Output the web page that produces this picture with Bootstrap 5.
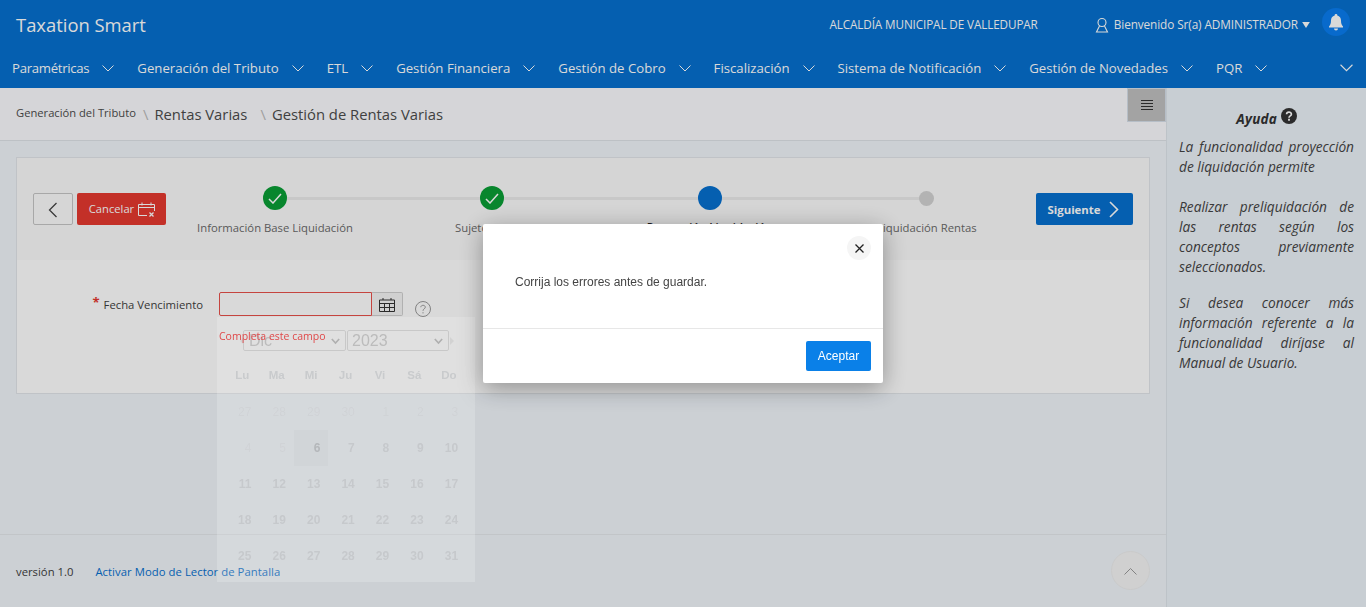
<!DOCTYPE html>
<html lang="es">
<head>
<meta charset="utf-8">
<title>Taxation Smart</title>
<link href="https://cdn.jsdelivr.net/npm/bootstrap@5.3.0/dist/css/bootstrap.min.css" rel="stylesheet">
<style>
html,body{height:607px;overflow:hidden}
body{font-family:"Open Sans","Noto Sans",sans-serif;font-size:12px;color:#404040;background:#f0f6fc}
.app-head{background:#0670cf;height:88px;color:#fff}
.brand-row{height:50px;padding:0 16px}
.brand-name{font-size:18.4px;line-height:24px;margin-top:-1px}
.entity{font-size:11.7px;letter-spacing:-.1px;margin-right:56px}
.user-box{font-size:11.8px;letter-spacing:-.1px}
.bell-wrap{width:28px;height:28px;border-radius:50%;background:#0a7df0;margin-left:12px;margin-top:-6px}
.menu-row{height:38px;padding:0 12px;position:relative}
.menu-item{font-size:13.2px;line-height:18px;color:#fff;text-decoration:none;margin-top:-2px;white-space:nowrap}
.menu-item:first-child{letter-spacing:-.3px}
.menu-item svg{margin-left:13px;margin-right:23px;vertical-align:1px}
.menu-end{position:absolute;right:13px;top:14px}
.work{height:519px}
.work-main{width:1167px;background:#f0f5fa;border-right:1px solid #dfe6ec}
.crumbs{height:53px;background:#fbfbfe;border-bottom:1px solid #dfe3e8;padding:0 16px;position:relative;color:#4c4c4c}
.crumb-sm{font-size:11.2px;margin-top:-1px}
.crumb-lg{font-size:14.8px;margin-top:1px}
.crumb-sep{color:#bbb;font-size:15px;margin:0 6px 0 7px}
.crumb-sep-b{margin:0 6px 0 13px}
.side-toggle{position:absolute;right:0;top:0;width:39px;height:34px;background:#c0c0c0;border:1px solid #d6e0ea}
.work-body{flex:1;padding:16px 16px 0}
.wiz-card{height:237px;border:1px solid #e2e6ea;background:#fff;border-radius:0}
.wiz-top{height:102px;background:#fbfbfb;padding:35px 16px 0;align-items:flex-start}
.btn-back{width:40px;height:32px;border:1px solid #c6c6c6;border-radius:2px;background:#fcfcfc;padding:0;margin-right:4px;flex:none}
.btn-cancel{width:89px;height:32px;background:#e53930;border:0;border-radius:2px;color:#fff;font-size:11.2px;padding:1px 0 0 2px;margin-right:1px;flex:none}
.btn-next{width:97px;height:32px;background:#0670cf;border:0;border-radius:2px;color:#fff;font-size:11.4px;font-weight:700;padding:1px 3px 0 0;margin-left:.5px;flex:none}
.steps{width:869.2px;margin-left:-.7px;flex:none}
.step-col{width:217.3px;flex:none;position:relative;text-align:center;height:60px;font-size:11.3px;color:#6a6a6a}
.step-line{position:absolute;left:108px;right:-108px;top:4px;height:3px;background:#ececec;z-index:0}
.step-dot{width:24px;height:24px;border-radius:50%;position:relative;z-index:1;margin:-7px auto 10px;display:flex;align-items:center;justify-content:center;background:#0a9e36}
.step-dot.dot-now{background:#0670cf}
.step-dot.dot-next{background:transparent}
.step-dot.dot-next i{display:block;width:15px;height:15px;border-radius:50%;background:#d3d3d3}
.step-now{color:#222;font-weight:600}
.step-now .step-dot{margin-bottom:9px}
.form-line{padding-top:32px}
.fld-label{width:186px;text-align:right;font-size:11.3px;color:#3e3e3e;padding-top:3px}
.fld-label b{color:#e53930;font-weight:700;font-size:13px;margin-right:1px;position:relative;top:-2px}
.fld-input{width:153px;height:24px;border:1px solid #e8504a;border-radius:2px 0 0 2px;background:#fff;margin-left:16px;padding:0}
.fld-btn{width:31px;height:24px;border:1px solid #d0d0d0;border-left:0;background:#f5f5f5;padding:0;border-radius:0 2px 2px 0}
.fld-help{margin:9px 0 0 12px}
.foot-bar{height:73px;border-top:1px solid #e4e8ec;padding:2px 16px 0;position:relative;font-size:11.3px}
.foot-link{color:#0670cf;text-decoration:none;margin-left:22px;letter-spacing:.05px}
.go-top{position:absolute;right:16px;top:16px;width:39px;height:39px;border-radius:50%;background:#f5f5f5;border:1px solid #eeeeee}
.help-pane{flex:1;background:#ecf2f8;padding:20px 12px 0 12px}
.help-title{font-style:italic;font-weight:700;font-size:13.5px;color:#333;text-align:center;margin-bottom:8px;letter-spacing:.2px}
.help-title svg{vertical-align:0}
.help-text{font-style:italic;font-size:13.7px;line-height:20px;color:#444;text-align:justify;margin:0 0 20px}
.help-tight{margin-bottom:16px}
.dim-layer{position:fixed;inset:0;background:rgba(0,0,0,.15);z-index:1040}
.date-pop{position:fixed;left:217px;top:317px;width:258px;height:265px;background:rgba(255,255,255,.18);z-index:1041;color:#c6c9cc;font-family:"Liberation Sans",sans-serif}
.date-err{position:fixed;left:219px;top:329px;color:#e0494a;font-size:10.5px;z-index:1042;line-height:14px}
.pop-sel{position:absolute;top:13px;height:21px;border:1px solid #c8c8c8;border-radius:2px;font-size:16px;line-height:19px;padding-left:5px;color:#bcbcbc}
.pop-sel svg{position:absolute;right:5px;top:7px}
.pop-sel-y{padding-left:4px}
.pop-arrow{position:absolute;top:20px;width:0;height:0;border-top:4px solid transparent;border-bottom:4px solid transparent}
.pop-prev{left:23px;border-right:4px solid #d2d2d2}
.pop-next{left:233px;border-left:4px solid #d2d2d2}
.cal-grid{position:absolute;left:8px;top:40px;width:241px;display:grid;grid-template-columns:repeat(7,34.45px);grid-template-rows:37px repeat(5,36px);font-size:12px;font-weight:700;text-align:right;line-height:36px}
.cal-grid span{padding-right:8px}
.cal-grid .wk{text-align:center;padding:0;line-height:36px;font-size:11.5px;color:#c9cbcd}
.cal-grid .old{color:#d0d3d6;font-weight:400}
.cal-grid .today{background:#d1d5d8;color:#b4b7ba}
.alert-dialog{width:400px;max-width:400px;margin:224px 0 0 483px}
.alert-box{height:159px;border:0;border-radius:2px;box-shadow:0 5px 25px rgba(0,0,0,.35);font-family:"Liberation Sans",sans-serif}
.alert-close{position:absolute;right:12px;top:12px;width:24px;height:24px;border-radius:50%;background:#f5f5f5;border:0;padding:0;line-height:1}
.alert-msg{height:105px;padding:51px 32px 0;font-size:12px;color:#444;line-height:14px;border-bottom:1px solid #e7e7e7}
.alert-foot{padding:12px}
.alert-ok{width:65px;height:30px;background:#0a80e8;border:0;border-radius:2px;color:#fff;font-size:12px;padding:0}
</style>
</head>
<body>
<header class="app-head">
  <div class="brand-row d-flex align-items-center justify-content-between">
    <div class="brand-name">Taxation Smart</div>
    <div class="d-flex align-items-center">
      <span class="entity">ALCALDÍA MUNICIPAL DE VALLEDUPAR</span>
      <span class="user-box d-flex align-items-center">
        <svg width="16" height="16" viewBox="0 0 16 16" fill="none" stroke="#fff" stroke-width="1.1" class="me-1"><circle cx="8" cy="5.5" r="4"/><path d="M5.5 9 2.5 15h11L10.500 9"/></svg>
        Bienvenido Sr(a) ADMINISTRADOR
        <svg width="8" height="6" viewBox="0 0 9 7" fill="#fff" class="ms-1"><path d="M0 0h9L4.500 7z"/></svg>
      </span>
      <span class="bell-wrap d-flex align-items-center justify-content-center">
        <svg width="14" height="17" viewBox="0 0 14 17" fill="#fff"><path d="M7 0a1.300 1.300 0 0 1 1.300 1.500C10.700 2.100 12 4 12 6.500c0 3 .6 4.500 2 6v1H0v-1c1.400-1.500 2-3 2-6C2 4 3.300 2.100 5.700 1.500A1.300 1.300 0 0 1 7 0zM5 14.500h4a2 2 0 0 1-4 0z"/></svg>
      </span>
    </div>
  </div>
  <nav class="menu-row d-flex align-items-center">
    <a class="menu-item" href="#">Paramétricas<svg width="12" height="7" viewBox="0 0 12 7" fill="none" stroke="#fff"><path d="M.5.5 6 6 11.500.5"/></svg></a>
    <a class="menu-item" href="#">Generación del Tributo<svg width="12" height="7" viewBox="0 0 12 7" fill="none" stroke="#fff"><path d="M.5.5 6 6 11.500.5"/></svg></a>
    <a class="menu-item" href="#">ETL<svg width="12" height="7" viewBox="0 0 12 7" fill="none" stroke="#fff"><path d="M.5.5 6 6 11.500.5"/></svg></a>
    <a class="menu-item" href="#">Gestión Financiera<svg width="12" height="7" viewBox="0 0 12 7" fill="none" stroke="#fff"><path d="M.5.5 6 6 11.500.5"/></svg></a>
    <a class="menu-item" href="#">Gestión de Cobro<svg width="12" height="7" viewBox="0 0 12 7" fill="none" stroke="#fff"><path d="M.5.5 6 6 11.500.5"/></svg></a>
    <a class="menu-item" href="#">Fiscalización<svg width="12" height="7" viewBox="0 0 12 7" fill="none" stroke="#fff"><path d="M.5.5 6 6 11.500.5"/></svg></a>
    <a class="menu-item" href="#">Sistema de Notificación<svg width="12" height="7" viewBox="0 0 12 7" fill="none" stroke="#fff"><path d="M.5.5 6 6 11.500.5"/></svg></a>
    <a class="menu-item" href="#">Gestión de Novedades<svg width="12" height="7" viewBox="0 0 12 7" fill="none" stroke="#fff"><path d="M.5.5 6 6 11.500.5"/></svg></a>
    <a class="menu-item" href="#">PQR<svg width="12" height="7" viewBox="0 0 12 7" fill="none" stroke="#fff"><path d="M.5.5 6 6 11.500.5"/></svg></a>
    <svg class="menu-end" width="13" height="8" viewBox="0 0 12 7" fill="none" stroke="#fff"><path d="M.5.5 6 6 11.500.5"/></svg>
  </nav>
</header>
<div class="work d-flex">
  <main class="work-main d-flex flex-column">
    <div class="crumbs d-flex align-items-center">
      <span class="crumb-sm">Generación del Tributo</span><span class="crumb-sep">\</span><span class="crumb-lg">Rentas Varias</span><span class="crumb-sep crumb-sep-b">\</span><span class="crumb-lg">Gestión de Rentas Varias</span>
      <div class="side-toggle d-flex align-items-center justify-content-center">
        <svg width="12" height="10" viewBox="0 0 12 10" stroke="#333"><path d="M0 .5h12M0 3.500h12M0 6.500h12M0 9.500h12"/></svg>
      </div>
    </div>
    <div class="work-body">
      <section class="wiz-card">
        <div class="wiz-top d-flex">
          <button class="btn-back" type="button"><svg width="10" height="16" viewBox="0 0 10 16" fill="none" stroke="#444" stroke-width="1.3"><path d="M8.500 1 1.500 8l7 7"/></svg></button>
          <button class="btn-cancel d-flex align-items-center justify-content-center" type="button">Cancelar
            <svg class="ms-1" width="18" height="15" viewBox="0 0 18 15" fill="none" stroke="#fff"><path d="M9 13.500H.5v-11h16V9M.5 5.500h16M4 .5v3M13 .5v3"/><path d="m11.500 10.500 4 4m0-4-4 4" stroke-width="1.300"/></svg>
          </button>
          <div class="steps d-flex">
            <div class="step-col"><div class="step-line"></div><div class="step-dot"><svg width="14" height="11" viewBox="0 0 14 11" fill="none" stroke="#fff" stroke-width="1.500"><path d="m1 6 4 4 8-9"/></svg></div>Información Base Liquidación</div>
            <div class="step-col"><div class="step-line"></div><div class="step-dot"><svg width="14" height="11" viewBox="0 0 14 11" fill="none" stroke="#fff" stroke-width="1.500"><path d="m1 6 4 4 8-9"/></svg></div>Sujeto Tributo</div>
            <div class="step-col step-now"><div class="step-line"></div><div class="step-dot dot-now"></div>Proyección Liquidación</div>
            <div class="step-col"><div class="step-dot dot-next"><i></i></div>Liquidación Rentas</div>
          </div>
          <button class="btn-next d-flex align-items-center justify-content-center" type="button">Siguiente
            <svg class="ms-2" width="10" height="17" viewBox="0 0 10 17" fill="none" stroke="#fff" stroke-width="1.600"><path d="m1 1 7.500 7.500L1 16"/></svg>
          </button>
        </div>
        <div class="form-line d-flex align-items-start">
          <label class="fld-label"><b>*</b> Fecha Vencimiento</label>
          <input class="fld-input" type="text" aria-label="Fecha Vencimiento">
          <button class="fld-btn" type="button"><svg width="16" height="14" viewBox="0 0 16 14" fill="none" stroke="#333"><path d="M.5 2h15v11.500H.5zM.5 5.500h15M.5 9.500h15M5.500 5.500v8M10.500 5.500v8M4 0v2M12 0v2"/></svg></button>
          <svg class="fld-help" width="16" height="16" viewBox="0 0 16 16" fill="none" stroke="#9a9a9a"><circle cx="8" cy="8" r="7.500"/><path d="M5.800 6.200C5.800 3.700 10.300 3.700 10.300 6.200 10.300 7.800 8 7.800 8 9.800"/><path d="M8 11.200v1.200"/></svg>
        </div>
      </section>
    </div>
    <footer class="foot-bar d-flex align-items-center">
      <span>versión 1.0</span><a class="foot-link" href="#">Activar Modo de Lector de Pantalla</a>
      <div class="go-top d-flex align-items-center justify-content-center"><svg width="13" height="8" viewBox="0 0 13 8" fill="none" stroke="#999"><path d="M.5 7.500 6.500 1.500l6 6"/></svg></div>
    </footer>
  </main>
  <aside class="help-pane">
    <div class="help-title">Ayuda <svg width="16" height="16" viewBox="0 0 16 16"><circle cx="8" cy="8" r="8" fill="#333"/><path d="M5.600 6.200C5.600 3.400 10.400 3.400 10.400 6.200 10.400 7.900 8 7.800 8 9.700" fill="none" stroke="#fff" stroke-width="1.700"/><path d="M8 10.800v2" stroke="#fff" stroke-width="1.800"/></svg></div>
    <p class="help-text">La funcionalidad proyección de liquidación permite</p>
    <p class="help-text help-tight">Realizar preliquidación de las rentas según los conceptos previamente seleccionados.</p>
    <p class="help-text">Si desea conocer más información referente a la funcionalidad diríjase al Manual de Usuario.</p>
  </aside>
</div>

<div class="dim-layer"></div>
<div class="date-pop">
  <i class="pop-arrow pop-prev"></i>
  <div class="pop-sel" style="left:26px;width:103px">Dic<svg width="9" height="7" viewBox="0 0 11 8" fill="none" stroke="#b0b0b0" stroke-width="2"><path d="m1 1 4.500 5L10 1"/></svg></div>
  <div class="pop-sel pop-sel-y" style="left:130px;width:102px">2023<svg width="9" height="7" viewBox="0 0 11 8" fill="none" stroke="#b0b0b0" stroke-width="2"><path d="m1 1 4.500 5L10 1"/></svg></div>
  <i class="pop-arrow pop-next"></i>
  <div class="cal-grid">
    <span class="wk">Lu</span><span class="wk">Ma</span><span class="wk">Mi</span><span class="wk">Ju</span><span class="wk">Vi</span><span class="wk">Sá</span><span class="wk">Do</span>
    <span class="old">27</span><span class="old">28</span><span class="old">29</span><span class="old">30</span><span class="old">1</span><span class="old">2</span><span class="old">3</span>
    <span class="old">4</span><span class="old">5</span><span class="today">6</span><span>7</span><span>8</span><span>9</span><span>10</span>
    <span>11</span><span>12</span><span>13</span><span>14</span><span>15</span><span>16</span><span>17</span>
    <span>18</span><span>19</span><span>20</span><span>21</span><span>22</span><span>23</span><span>24</span>
    <span>25</span><span>26</span><span>27</span><span>28</span><span>29</span><span>30</span><span>31</span>
  </div>
</div>
<div class="date-err">Completa este campo</div>

<div class="modal d-block" tabindex="-1" role="dialog">
  <div class="modal-dialog alert-dialog">
    <div class="modal-content alert-box">
      <button class="alert-close" type="button" aria-label="Cerrar"><svg width="9" height="9" viewBox="0 0 9 9" stroke="#222" stroke-width="1.300"><path d="m.5.5 8 8m0-8-8 8"/></svg></button>
      <div class="alert-msg">Corrija los errores antes de guardar.</div>
      <div class="alert-foot d-flex justify-content-end"><button class="alert-ok" type="button">Aceptar</button></div>
    </div>
  </div>
</div>
<script src="https://cdn.jsdelivr.net/npm/bootstrap@5.3.0/dist/js/bootstrap.bundle.min.js"></script>
</body>
</html>
